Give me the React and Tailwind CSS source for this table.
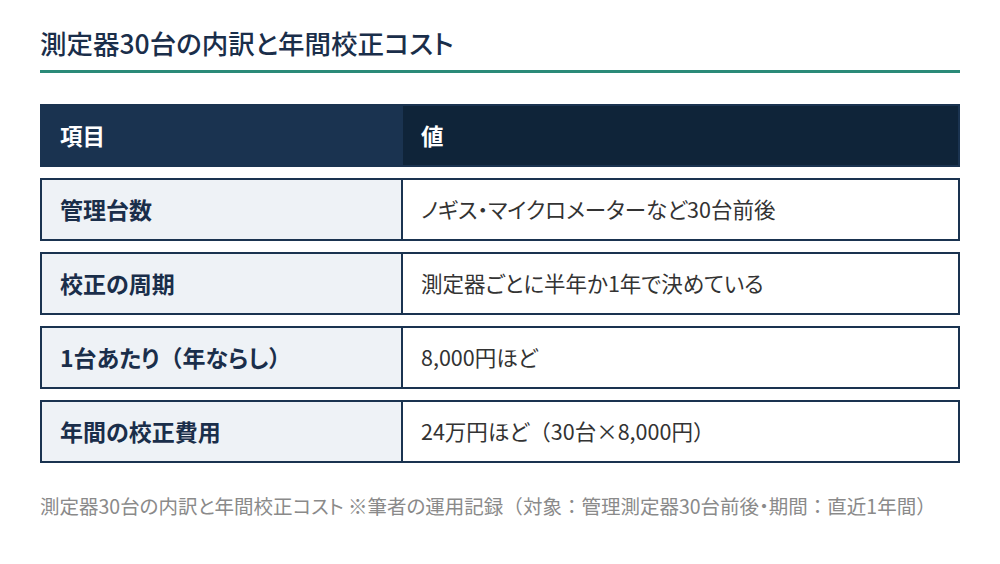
function J({ t }) {
  const parts = t.split(/([（）：])/);
  return (
    <>
      {parts.map((p, i) =>
        /^[（）：]$/.test(p) ? (
          <span key={i} className="[font-feature-settings:normal]">
            {p}
          </span>
        ) : (
          <span key={i}>{p}</span>
        )
      )}
    </>
  );
}

export default function App() {
  const rows = [
    ["管理台数", "ノギス・マイクロメーターなど30台前後"],
    ["校正の周期", "測定器ごとに半年か1年で決めている"],
    ["1台あたり（年ならし）", "8,000円ほど"],
    ["年間の校正費用", "24万円ほど（30台×8,000円）"],
  ];
  return (
    <div className="w-[1000px] h-[564px] bg-white px-[40px] pt-[24px] font-['Noto_Sans_CJK_JP','Noto_Sans',sans-serif] [font-feature-settings:'palt']">
      <h1 className="text-[26.5px] font-medium leading-[38px] text-[#1a2e4a]">
        測定器30台の内訳と年間校正コスト
      </h1>
      <div className="mt-[8px] h-[3px] bg-[#2a8a78]" />
      <div className="mt-[31px] flex flex-col gap-[11px]">
        <div className="flex h-[63px] border-2 border-[#1a3350] bg-[#1a3350]">
          <div className="w-[359px] flex items-center pl-[18px] text-[22.5px] font-bold text-white">
            項目
          </div>
          <div className="flex-1 flex items-center pl-[18px] bg-[#0f2439] border-l-2 border-[#1a3350] text-[22.5px] font-bold text-white">
            値
          </div>
        </div>
        {rows.map(([k, v]) => (
          <div key={k} className="flex h-[63px] border-2 border-[#1a3350]">
            <div className="w-[359px] flex items-center pl-[18px] bg-[#eef2f6] text-[23px] font-bold text-[#1a2e4a]">
              <J t={k} />
            </div>
            <div className="flex-1 flex items-center pl-[18px] bg-white border-l-2 border-[#1a3350] text-[21.5px] text-[#333333]">
              <J t={v} />
            </div>
          </div>
        ))}
      </div>
      <p className="mt-[30px] text-[19.5px] leading-[26px] text-[#8a8a8a]">
        <J t="測定器30台の内訳と年間校正コスト ※筆者の運用記録（対象：管理測定器30台前後・期間：直近1年間）" />
      </p>
    </div>
  );
}
